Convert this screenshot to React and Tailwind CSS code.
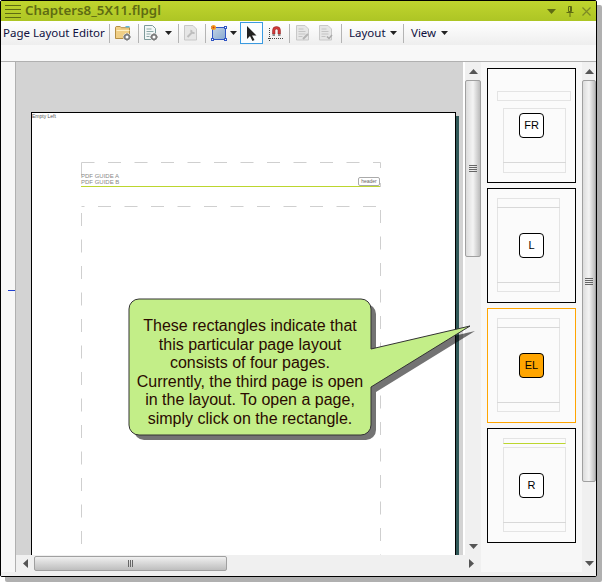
const THUMBS = [
  {
    label: "FR",
    frames: [
      [10, 22, 73, 9],
      [16, 39, 62, 54],
      [16, 93, 62, 10],
    ],
  },
  {
    label: "L",
    frames: [
      [10, 9, 62, 9],
      [10, 18, 62, 75],
      [10, 93, 62, 9],
    ],
  },
  {
    label: "EL",
    active: true,
    frames: [
      [10, 9, 62, 9],
      [10, 18, 62, 75],
      [10, 93, 62, 9],
    ],
  },
  {
    label: "R",
    line: true,
    frames: [
      [16, 9, 62, 5],
      [16, 18, 62, 75],
      [16, 93, 62, 9],
    ],
  },
];

function Sep({ className = "" }) {
  return <div className={`h-[19px] w-px bg-[#b4b4b4] shrink-0 ${className}`} />;
}

function Caret({ className = "" }) {
  return (
    <svg width="7" height="4" viewBox="0 0 7 4" className={`shrink-0 ${className}`}>
      <path d="M0 0h7L3.500 4z" fill="#222" />
    </svg>
  );
}

function Gear({ cx, cy }) {
  return (
    <g>
      <circle cx={cx} cy={cy} r="3.800" fill="#fff" />
      <circle cx={cx} cy={cy} r="2.400" fill="none" stroke="#7c7c7c" strokeWidth="1.800" />
      <path
        d={`M${cx} ${cy - 4}v1.500M${cx} ${cy + 2.500}v1.500M${cx - 4} ${cy}h1.500M${cx + 2.500} ${cy}h1.500`}
        stroke="#7c7c7c"
      />
    </g>
  );
}

function FolderIcon({ className = "" }) {
  return (
    <svg width="16" height="16" viewBox="0 0 16 16" className={`shrink-0 ${className}`}>
      <path d="M.5 13.500V2.200l.7-.7h4l1 1.200h8.300v10.800z" fill="#f0cf86" stroke="#b58f45" />
      <path d="M1.500 5h13v1h-13z" fill="#fff0c4" />
      <path d="M10.500 1h4v1.500h-4z" fill="#5fb8dc" />
      <Gear cx={12} cy={12} />
    </svg>
  );
}

function DocGearIcon({ className = "" }) {
  return (
    <svg width="14" height="16" viewBox="0 0 14 16" className={`shrink-0 ${className}`}>
      <path d="M.5.500h8l3 3v11h-11z" fill="#f2f7f7" stroke="#7d9a9a" />
      <path d="M2.500 4h5M2.500 6.500h7M2.500 9h4M2.500 11.500h3" stroke="#8ca8a8" />
      <Gear cx={10} cy={12} />
    </svg>
  );
}

function GhostDoc({ mark, className = "" }) {
  return (
    <svg width="14" height="16" viewBox="0 0 14 16" className={`shrink-0 ${className}`}>
      <path d="M.5.500h8.500l3.500 3.500v11h-12z" fill="#e6e6e6" stroke="#c8c8c8" />
      {mark === "wrench" ? (
        <path d="M3.500 12l5-5M7.500 5a2 2 0 0 0 3 2.500" stroke="#bdbdbd" strokeWidth="2" fill="none" />
      ) : (
        <path d="M2.500 4h5M2.500 6.500h7M2.500 9h7M2.500 11.500h4" stroke="#c4c4c4" />
      )}
      {mark === "pencil" && <path d="M7 14l5-5" stroke="#b4b4b4" strokeWidth="2" />}
      {mark === "check" && <path d="M8 11.500l2 2 3-3.500" stroke="#aaa" strokeWidth="1.500" fill="none" />}
    </svg>
  );
}

function ShapeIcon({ className = "" }) {
  return (
    <svg width="16" height="16" viewBox="0 0 16 16" className={`shrink-0 ${className}`}>
      <defs>
        <linearGradient id="shapeFill" x1="0" y1="0" x2="1" y2="1">
          <stop offset="0" stopColor="#c4d4e4" />
          <stop offset="1" stopColor="#86a8d0" />
        </linearGradient>
      </defs>
      <rect x="1.500" y="2.500" width="13" height="12" fill="url(#shapeFill)" stroke="#2f55c4" />
      {[
        [0, 1],
        [13, 1],
        [0, 13],
        [13, 13],
      ].map(([x, y]) => (
        <rect key={`${x}-${y}`} x={x + 0.5} y={y + 0.5} width="2" height="2" fill="#fff" stroke="#2f55c4" />
      ))}
      <circle cx="2.500" cy="2.500" r="2.500" fill="#f4a020" />
      <circle cx="2.500" cy="2.500" r="1" fill="#d83a10" />
    </svg>
  );
}

function MagnetIcon({ className = "" }) {
  return (
    <svg width="15" height="16" viewBox="0 0 15 16" className={`shrink-0 ${className}`}>
      <path d="M0 13.500h15M1.500 3v13" stroke="#444" strokeDasharray="1 1" />
      <path d="M4.500 9V5.500a4 4 0 0 1 8 0V9h-2.500V5.500a1.500 1.500 0 0 0-3 0V9z" fill="#d23a3a" stroke="#8a2020" strokeWidth=".5" />
      <path d="M4.500 9H7v2H4.500zM10 9h2.500v2H10z" fill="#8c8c8c" />
    </svg>
  );
}

function Grip({ horizontal = false }) {
  return (
    <div className={`flex gap-px ${horizontal ? "flex-row" : "flex-col"}`}>
      {[0, 1, 2, 3].slice(horizontal ? 1 : 0).map((i) => (
        <div key={i} className={horizontal ? "w-px h-[7px] bg-[#666]" : "h-px w-[8px] bg-[#666]"} />
      ))}
    </div>
  );
}

function Arrow({ dir }) {
  const d = {
    up: "M0 5L4.500 0 9 5z",
    down: "M0 0h9L4.500 5z",
    left: "M5 0v9L0 4.500z",
    right: "M0 0v9l5-4.500z",
  }[dir];
  const wide = dir === "up" || dir === "down";
  return (
    <svg width={wide ? 9 : 5} height={wide ? 5 : 9} viewBox={wide ? "0 0 9 5" : "0 0 5 9"}>
      <path d={d} fill="#555" />
    </svg>
  );
}

function VScroll({ thumbHeight, gripOffset, width }) {
  return (
    <div className={`flex flex-col h-full shrink-0 bg-[#f0f0f0] ${width}`}>
      <div className="h-[18px] flex items-center justify-center shrink-0">
        <Arrow dir="up" />
      </div>
      <div
        className="shrink-0 flex flex-col items-center border border-[#a0a0a0] rounded-[2px] bg-linear-to-r from-[#dcdcdc] via-[#f4f4f4] to-[#bcbcbc]"
        style={{ height: thumbHeight, paddingTop: gripOffset }}
      >
        <Grip />
      </div>
      <div className="flex-1" />
      <div className="h-[18px] flex items-center justify-center shrink-0">
        <Arrow dir="down" />
      </div>
    </div>
  );
}

function PageThumb({ thumb }) {
  return (
    <div
      className={`relative w-[89px] h-[115px] border bg-[#fbfbfb] shrink-0 ${
        thumb.active ? "border-[#ffa500]" : "border-black"
      }`}
    >
      <svg width="87" height="113" className="absolute left-0 top-0">
        {thumb.frames.map(([x, y, w, h]) => (
          <rect
            key={`${x}-${y}`}
            x={x - 0.5}
            y={y + 0.5}
            width={w}
            height={h}
            fill="none"
            stroke="#cccccc"
            strokeDasharray="1 1"
          />
        ))}
        {thumb.line && <path d="M15.500 14.500h62" stroke="#bcd62e" />}
      </svg>
      <div className="absolute inset-0 flex items-center justify-center">
        <div
          className={`w-[25px] h-[25px] rounded-[4px] border border-black flex items-center justify-center text-[11px] text-black font-['Liberation_Sans',sans-serif] ${
            thumb.active ? "bg-[#ffa500]" : "bg-white"
          }`}
        >
          {thumb.label}
        </div>
      </div>
    </div>
  );
}

function PageSheet() {
  return (
    <div className="relative w-[425px] h-[520px] border border-black bg-white shadow-[3px_4px_0_#2f5757] font-['Liberation_Sans',sans-serif]">
      <svg width="423" height="518" className="absolute left-0 top-0" fill="none" stroke="#cfcfcf">
        <path d="M49.500 49.500h299v7" strokeDasharray="13 13.500" />
        <path d="M49.500 49.500v25M348.500 70v4" strokeDasharray="13 13.500" />
        <path d="M49.500 93.500h299" strokeDasharray="13 13.500" strokeDashoffset="10" />
        <path d="M49.500 100V518M348.500 97V518" strokeDasharray="13 13.500" />
      </svg>
      <p className="text-[5px] leading-[6px] text-[#555] whitespace-nowrap">Empty Left</p>
      <div className="relative w-[299px] ml-[49px] mt-[43px] border-b border-[#bcd62e] h-[25px]">
        <p className="absolute left-0 top-[11px] text-[6px] leading-[7px] text-[#888] whitespace-nowrap">PDF GUIDE A</p>
        <p className="absolute left-0 top-[17px] text-[6px] leading-[7px] text-[#888] whitespace-nowrap">PDF GUIDE B</p>
        <div className="absolute right-0 bottom-0 w-[22px] h-[9px] rounded-[2px] border border-[#aaa] bg-white flex items-center justify-center text-[5px] leading-[5px] text-[#666]">
          header
        </div>
      </div>
    </div>
  );
}

function Callout() {
  return (
    <div className="absolute left-[120px] top-[290px] w-[360px] h-[170px]">
      <svg width="360" height="170" className="absolute left-0 top-0">
        <path
          d="M19 9H241a10 10 0 0 1 10 10V59L350 36 251 97v38a10 10 0 0 1-10 10H19a10 10 0 0 1-10-10V19a10 10 0 0 1 10-10z"
          fill="#000"
          fillOpacity=".55"
          transform="translate(5 5)"
        />
        <path
          d="M19 9H241a10 10 0 0 1 10 10V59L350 36 251 97v38a10 10 0 0 1-10 10H19a10 10 0 0 1-10-10V19a10 10 0 0 1 10-10z"
          fill="#c3ee88"
          stroke="#333"
        />
      </svg>
      <p className="absolute left-[9px] top-[27px] w-[242px] text-center text-[16px] leading-[18.500px] text-[#2a0a00] font-['Liberation_Sans',sans-serif]">
        These rectangles indicate that
        <br />
        this particular page layout
        <br />
        consists of four pages.
        <br />
        Currently, the third page is open
        <br />
        in the layout. To open a page,
        <br />
        simply click on the rectangle.
      </p>
    </div>
  );
}

export default function App() {
  return (
    <div className="relative w-[602px] h-[582px] bg-white overflow-hidden">
      <div className="flex flex-col w-[597px] h-[577px] border border-black rounded-[2px] bg-[#f7f7f7] shadow-[5px_5px_0_#b0b0b0] font-['Noto_Sans',sans-serif]">
        {/* title bar */}
        <div className="flex items-center h-[20px] shrink-0 bg-linear-to-b from-[#c0d52e] to-[#adc524] pl-[4px]">
          <div className="flex flex-col gap-[3px] w-[16px]">
            <div className="h-px bg-[#5e6b12]" />
            <div className="h-px bg-[#5e6b12]" />
            <div className="h-px bg-[#5e6b12]" />
            <div className="h-px bg-[#5e6b12]" />
          </div>
          <span className="ml-[4px] text-[13.300px] font-semibold text-[#5e6b12] whitespace-nowrap">Chapters8_5X11.flpgl</span>
          <div className="ml-auto flex items-center pr-[5px]">
            <svg width="9" height="5" viewBox="0 0 9 5">
              <path d="M0 0h9L4.500 5z" fill="#5e6b12" />
            </svg>
            <svg width="8" height="11" viewBox="0 0 8 11" className="ml-[10px]">
              <path d="M2.500.5h3v5h-3zM.5 6.500h7M4 6.500V11M4.500 1v4.500" fill="none" stroke="#5e6b12" />
            </svg>
            <svg width="9" height="9" viewBox="0 0 9 9" className="ml-[8px]">
              <path d="M.5.5l8 8M8.500.5l-8 8" stroke="#7d8a25" strokeWidth="1.200" />
            </svg>
          </div>
        </div>

        {/* toolbar */}
        <div className="flex items-center h-[24px] shrink-0 bg-linear-to-b from-white to-[#eeeeee] text-[11.500px] text-[#101040]">
          <span className="w-[108px] pl-[2px] whitespace-nowrap shrink-0">Page Layout Editor</span>
          <Sep />
          <FolderIcon className="ml-[5px]" />
          <Sep className="ml-[7px]" />
          <DocGearIcon className="ml-[5px]" />
          <Caret className="ml-[7px]" />
          <Sep className="ml-[6px]" />
          <GhostDoc mark="wrench" className="ml-[5px]" />
          <Sep className="ml-[7px]" />
          <ShapeIcon className="ml-[5px]" />
          <Caret className="ml-[3px]" />
          <div className="ml-[3px] w-[23px] h-[22px] shrink-0 border border-[#3a9ae0] bg-[#fafdff] flex items-center justify-center">
            <svg width="10" height="15" viewBox="0 0 10 15">
              <path d="M0 0v13l3-3 2.500 5 2-1-2.500-4.500h4.500z" fill="#222" />
            </svg>
          </div>
          <MagnetIcon className="ml-[5px]" />
          <Sep className="ml-[6px]" />
          <GhostDoc mark="pencil" className="ml-[6px]" />
          <GhostDoc mark="check" className="ml-[9px]" />
          <Sep className="ml-[8px]" />
          <span className="ml-[7px] w-[37px] shrink-0">Layout</span>
          <Caret className="ml-[4px]" />
          <Sep className="ml-[6px]" />
          <span className="ml-[7px] w-[26px] shrink-0">View</span>
          <Caret className="ml-[4px]" />
        </div>

        <div className="h-[17px] shrink-0 bg-[#f8f8f8] border-b border-[#b0b0b0]" />

        {/* editor */}
        <div className="flex h-[510px] shrink-0">
          <div className="w-[15px] shrink-0 border-r border-[#b0b0b0] pt-[228px]">
            <div className="h-px w-[7px] ml-auto bg-[#2040d0]" />
          </div>

          <div className="flex flex-col w-[465px] shrink-0">
            <div className="flex h-[493px] shrink-0">
              <div className="w-[449px] shrink-0 border-r-2 border-white bg-[#d3d3d3] pl-[15px] pt-[50px] overflow-hidden">
                <PageSheet />
              </div>
              <VScroll thumbHeight={177} gripOffset={84} width="w-[16px]" />
            </div>
            <div className="flex h-[17px] shrink-0 bg-[#f0f0f0]">
              <div className="w-[18px] flex items-center justify-center shrink-0">
                <Arrow dir="left" />
              </div>
              <div className="w-[193px] h-[15px] mt-px shrink-0 flex items-center justify-center border border-[#a0a0a0] rounded-[2px] bg-linear-to-b from-[#f0f0f0] to-[#bebebe]">
                <Grip horizontal />
              </div>
              <div className="flex-1" />
              <div className="w-[20px] flex items-center justify-center shrink-0">
                <Arrow dir="right" />
              </div>
            </div>
          </div>

          <div className="flex flex-col gap-[5px] w-[101px] shrink-0 pl-[6px] pt-[6px] bg-[#f7f7f7]">
            {THUMBS.map((thumb) => (
              <PageThumb key={thumb.label} thumb={thumb} />
            ))}
          </div>

          <VScroll thumbHeight={402} gripOffset={197} width="w-[14px]" />
        </div>

        <div className="flex-1 bg-[#f0f0f0]" />
      </div>

      <Callout />
    </div>
  );
}
